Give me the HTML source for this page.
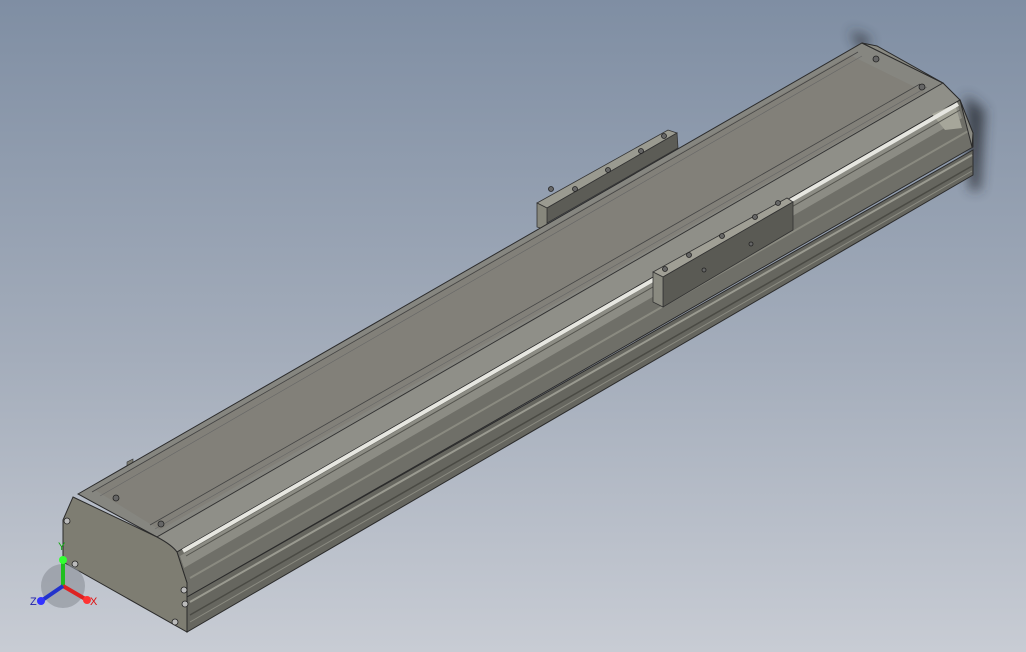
<!DOCTYPE html>
<html><head><meta charset="utf-8"><style>
html,body{margin:0;padding:0;width:1026px;height:652px;overflow:hidden;}
svg{display:block}
</style></head><body>
<svg width="1026" height="652" viewBox="0 0 1026 652" xmlns="http://www.w3.org/2000/svg">
<defs>
<linearGradient id="bg" x1="0" y1="0" x2="0" y2="1">
<stop offset="0" stop-color="#7f8ea3"/><stop offset="0.55" stop-color="#a4adbb"/><stop offset="1" stop-color="#c8ccd4"/>
</linearGradient>
<filter id="blur"><feGaussianBlur stdDeviation="6"/></filter>
</defs>
<rect width="1026" height="652" fill="url(#bg)"/>
<path d="M850,30 L872,40 L860,50 Z M965,95 L985,110 L980,190 L970,190 Z" fill="#2a2e35" filter="url(#blur)" opacity="0.8"/>
<polygon points="537,203 668,130 677,133 547,208" fill="#9a9a90" stroke="#333" stroke-width="0.8"/>
<polygon points="547,208 677,133 678,148 547,223" fill="#5c5c56" stroke="#333" stroke-width="0.8"/>
<polygon points="537,203 547,208 547,230 537,227" fill="#87877c" stroke="#333" stroke-width="0.8"/>
<polygon points="127,462 133,459 133,470 127,473" fill="#7c7c72" stroke="#333" stroke-width="0.6"/>
<polygon points="78,494 862,43 943,83 157,537" fill="#868680" stroke="#2b2b2b" stroke-width="1"/>
<polygon points="95,490 850,55 925,92 160,530" fill="#828079"/>
<line x1="92" y1="492" x2="858" y2="52" stroke="#444" stroke-width="0.8"/>
<line x1="100" y1="496" x2="862" y2="56" stroke="#666" stroke-width="0.6"/>
<line x1="150" y1="525" x2="920" y2="84" stroke="#444" stroke-width="0.8"/>
<line x1="155" y1="529" x2="927" y2="87" stroke="#666" stroke-width="0.6"/>
<polygon points="157,537 943,83 960,100 177,552" fill="#8f8f88" stroke="#333" stroke-width="0.8"/>
<polygon points="177,552 960,100 973,133 973,147 187,597 187,583" fill="#6f6f68" stroke="#2b2b2b" stroke-width="1"/>
<polygon points="180,556 958,106 962,118 184,568" fill="#8c8c84"/>
<polygon points="932,114 955,104 962,128 945,130" fill="#a6a69a"/>
<line x1="183" y1="551" x2="958" y2="104" stroke="#e6e6e0" stroke-width="4"/>
<line x1="186" y1="556" x2="960" y2="110" stroke="#55554f" stroke-width="1"/>
<line x1="190" y1="578" x2="970" y2="130" stroke="#8a8a80" stroke-width="2"/>
<polygon points="187,597 973,150 973,175 187,632" fill="#66665f" stroke="#2b2b2b" stroke-width="1"/>
<line x1="190" y1="602" x2="972" y2="155" stroke="#9a9a90" stroke-width="2"/>
<line x1="190" y1="615" x2="972" y2="166" stroke="#4a4a44" stroke-width="1.5"/>
<line x1="190" y1="622" x2="972" y2="171" stroke="#8a8a80" stroke-width="1"/>
<polygon points="862,43 877,46 943,83 960,100 973,133 972,147 960,100 943,83" fill="#8a8a82" stroke="#2b2b2b" stroke-width="1"/>
<polygon points="653,272 787,198 793,202 663,277" fill="#a09f95" stroke="#333" stroke-width="0.8"/>
<polygon points="663,277 793,202 793,230 663,307" fill="#5a5a54" stroke="#333" stroke-width="0.8"/>
<polygon points="653,272 663,277 663,307 653,302" fill="#8a8a80" stroke="#333" stroke-width="0.8"/>
<path d="M73,497 L157,537 Q172,545 177,552 L187,583 L187,632 L63,562 L63,520 Z" fill="#7e7d72" stroke="#2b2b2b" stroke-width="1"/>
<g fill="#666" stroke="#222" stroke-width="0.8">
<circle cx="116" cy="498" r="3"/><circle cx="161" cy="524" r="3"/>
<circle cx="876" cy="59" r="3"/><circle cx="922" cy="87" r="3"/>
<circle cx="67" cy="521" r="3" fill="#bbb"/><circle cx="75" cy="564" r="3" fill="#bbb"/>
<circle cx="184" cy="590" r="3" fill="#bbb"/><circle cx="185" cy="604" r="3" fill="#bbb"/><circle cx="175" cy="622" r="3" fill="#bbb"/>
<circle cx="551" cy="189" r="2.5"/><circle cx="575" cy="189" r="2.5"/><circle cx="608" cy="170" r="2.5"/><circle cx="641" cy="151" r="2.5"/><circle cx="664" cy="136" r="2.5"/>
<circle cx="665" cy="269" r="2.5"/><circle cx="689" cy="255" r="2.5"/><circle cx="722" cy="236" r="2.5"/><circle cx="755" cy="217" r="2.5"/><circle cx="778" cy="203" r="2.5"/>
<circle cx="704" cy="270" r="2"/><circle cx="751" cy="244" r="2"/>
</g>
<circle cx="63" cy="586" r="22" fill="#8a8f98" opacity="0.6"/>
<line x1="63" y1="586" x2="63" y2="560" stroke="#1fbf1f" stroke-width="4"/>
<circle cx="63" cy="560" r="4" fill="#3f3"/>
<line x1="63" y1="586" x2="87" y2="600" stroke="#d22" stroke-width="4"/>
<circle cx="87" cy="600" r="4" fill="#f33"/>
<line x1="63" y1="586" x2="41" y2="601" stroke="#2233cc" stroke-width="4"/>
<circle cx="41" cy="601" r="4" fill="#33f"/>
<g font-family="Liberation Sans, sans-serif" font-size="11">
<text x="58" y="550" fill="#1a1">Y</text>
<text x="90" y="605" fill="#d11">X</text>
<text x="30" y="605" fill="#22a">Z</text>
</g>
</svg>
</body></html>
